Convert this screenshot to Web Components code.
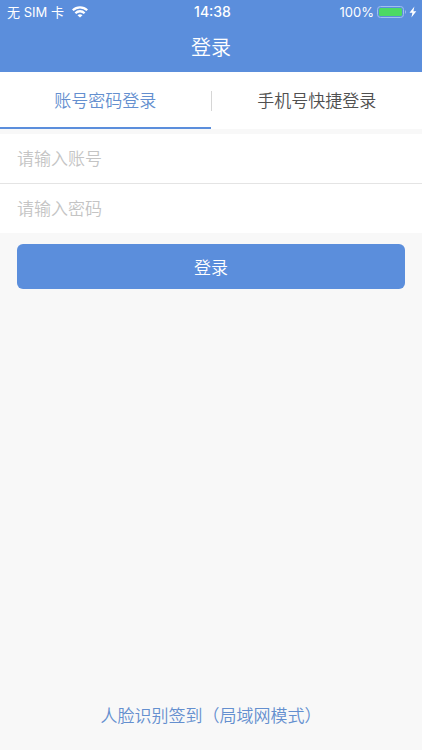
<!DOCTYPE html>
<html lang="zh-CN">
<head>
<meta charset="UTF-8">
<meta name="viewport" content="width=device-width, initial-scale=1">
<title>登录</title>
<style>
  :root {
    --primary: #5b8edc;
    --link: #648fcf;
    --background: #f8f8f8;
    --line: #e4e4e4;
    --text: #505050;
    --placeholder: #c4c4c4;
  }
  body {
    margin: 0;
    background: var(--background);
    color: var(--text);
    font-family: Inter, "Noto Sans CJK SC", sans-serif;
    font-size: 17px;
    font-weight: 350;
  }
</style>
</head>
<body>
<login-page></login-page>

<script>
class StatusBar extends HTMLElement {
  constructor() {
    super();
    this.attachShadow({ mode: "open" });
    this.shadowRoot.innerHTML = `
      <style>
        :host {
          display: grid;
          grid-template-columns: 1fr auto 1fr;
          align-items: center;
          height: 24px;
          padding: 0 4px 0 7px;
          font-size: 13px;
          font-weight: 400;
          line-height: 24px;
        }
        div {
          display: flex;
          align-items: center;
        }
        .network { gap: 8px; }
        .time {
          font-size: 14px;
          font-weight: 500;
        }
        .power {
          justify-content: flex-end;
          gap: 3px;
        }
        svg { display: block; }
      </style>
      <div class="network">
        <span>${this.getAttribute("carrier")}</span>
        <svg width="16" height="12" viewBox="0 0 16 12" fill="none" stroke="currentColor" stroke-width="2.3">
          <path d="M.8 4.3C4.9.3 11.1.3 15.2 4.3"/>
          <path d="M3.4 7.2C6 4.6 10 4.6 12.6 7.2"/>
          <path d="M8 11.6 5.5 9.2Q8 7.1 10.5 9.2Z" fill="currentColor" stroke="none"/>
        </svg>
      </div>
      <span class="time">${this.getAttribute("time")}</span>
      <div class="power">
        <span>${this.getAttribute("battery")}</span>
        <svg width="41" height="14" viewBox="0 0 41 14">
          <rect x=".5" y="1.5" width="26" height="11" rx="3" fill="none" stroke="#a0c0ef"/>
          <rect x="2" y="3" width="23" height="8" rx="1.5" fill="#4cd964"/>
          <path d="M28 5Q30 7 28 9Z" fill="#a0c0ef"/>
          <path d="M37.4 1.5 32.5 7.8H35.4L34.4 12.5 39.3 6.2H36.4Z" fill="currentColor"/>
        </svg>
      </div>
    `;
  }
}

class AppHeader extends HTMLElement {
  constructor() {
    super();
    this.attachShadow({ mode: "open" });
    this.shadowRoot.innerHTML = `
      <style>
        :host {
          display: block;
          background: var(--primary);
          color: #fff;
        }
        h1 {
          margin: 0;
          font-size: 20px;
          font-weight: inherit;
          line-height: 48px;
          text-align: center;
        }
      </style>
      <slot name="status"></slot>
      <h1><slot></slot></h1>
    `;
  }
}

class LoginTabs extends HTMLElement {
  constructor() {
    super();
    this.attachShadow({ mode: "open" });
    this.shadowRoot.innerHTML = `
      <style>
        :host {
          display: flex;
          align-items: center;
          background: #fff;
        }
        button {
          flex: 1;
          height: 57px;
          padding: 0;
          border: 0;
          border-bottom: 2px solid transparent;
          background: none;
          color: inherit;
          font: inherit;
          cursor: pointer;
        }
        button[aria-selected="true"] {
          border-color: var(--primary);
          color: var(--link);
        }
        .divider {
          width: 1px;
          height: 20px;
          background: #d6d6d6;
        }
      </style>
      <button type="button" role="tab" aria-selected="true">账号密码登录</button>
      <span class="divider"></span>
      <button type="button" role="tab" aria-selected="false">手机号快捷登录</button>
    `;
    const tabs = this.shadowRoot.querySelectorAll("button");
    tabs.forEach((tab) => {
      tab.addEventListener("click", () => {
        tabs.forEach((t) => t.setAttribute("aria-selected", String(t === tab)));
      });
    });
  }
}

class FormField extends HTMLElement {
  constructor() {
    super();
    this.attachShadow({ mode: "open" });
    const label = this.getAttribute("label");
    this.shadowRoot.innerHTML = `
      <style>
        :host {
          display: block;
          background: #fff;
        }
        input {
          display: block;
          box-sizing: border-box;
          width: 100%;
          height: 49px;
          padding: 0 17px;
          border: 0;
          outline: 0;
          background: none;
          color: var(--text);
          font: inherit;
        }
        input::placeholder {
          color: var(--placeholder);
          opacity: 1;
        }
      </style>
      <input type="${this.getAttribute("type")}" aria-label="${label}" placeholder="${label}">
    `;
  }
}

class PrimaryButton extends HTMLElement {
  constructor() {
    super();
    this.attachShadow({ mode: "open" });
    this.shadowRoot.innerHTML = `
      <style>
        :host { display: block; }
        button {
          width: 100%;
          height: 45px;
          padding: 0;
          border: 0;
          border-radius: 6px;
          background: var(--primary);
          color: #fff;
          font: inherit;
          cursor: pointer;
        }
      </style>
      <button type="button"><slot></slot></button>
    `;
  }
}

class LoginPage extends HTMLElement {
  constructor() {
    super();
    this.attachShadow({ mode: "open" });
    this.shadowRoot.innerHTML = `
      <style>
        :host {
          display: flex;
          flex-direction: column;
          min-height: 100vh;
        }
        .fields {
          display: grid;
          gap: 1px;
          margin-top: 5px;
          background: var(--line);
        }
        primary-button { margin: 11px 17px; }
        footer {
          margin-top: auto;
          padding-bottom: 20px;
          line-height: 28px;
          text-align: center;
        }
        a {
          color: var(--link);
          text-decoration: none;
        }
      </style>
      <app-header>
        <status-bar slot="status" carrier="无 SIM 卡" time="14:38" battery="100%"></status-bar>
        登录
      </app-header>
      <login-tabs role="tablist"></login-tabs>
      <div class="fields">
        <form-field type="text" label="请输入账号"></form-field>
        <form-field type="password" label="请输入密码"></form-field>
      </div>
      <primary-button>登录</primary-button>
      <footer><a href="#face">人脸识别签到（局域网模式）</a></footer>
    `;
  }
}

customElements.define("status-bar", StatusBar);
customElements.define("app-header", AppHeader);
customElements.define("login-tabs", LoginTabs);
customElements.define("form-field", FormField);
customElements.define("primary-button", PrimaryButton);
customElements.define("login-page", LoginPage);
</script>
</body>
</html>
